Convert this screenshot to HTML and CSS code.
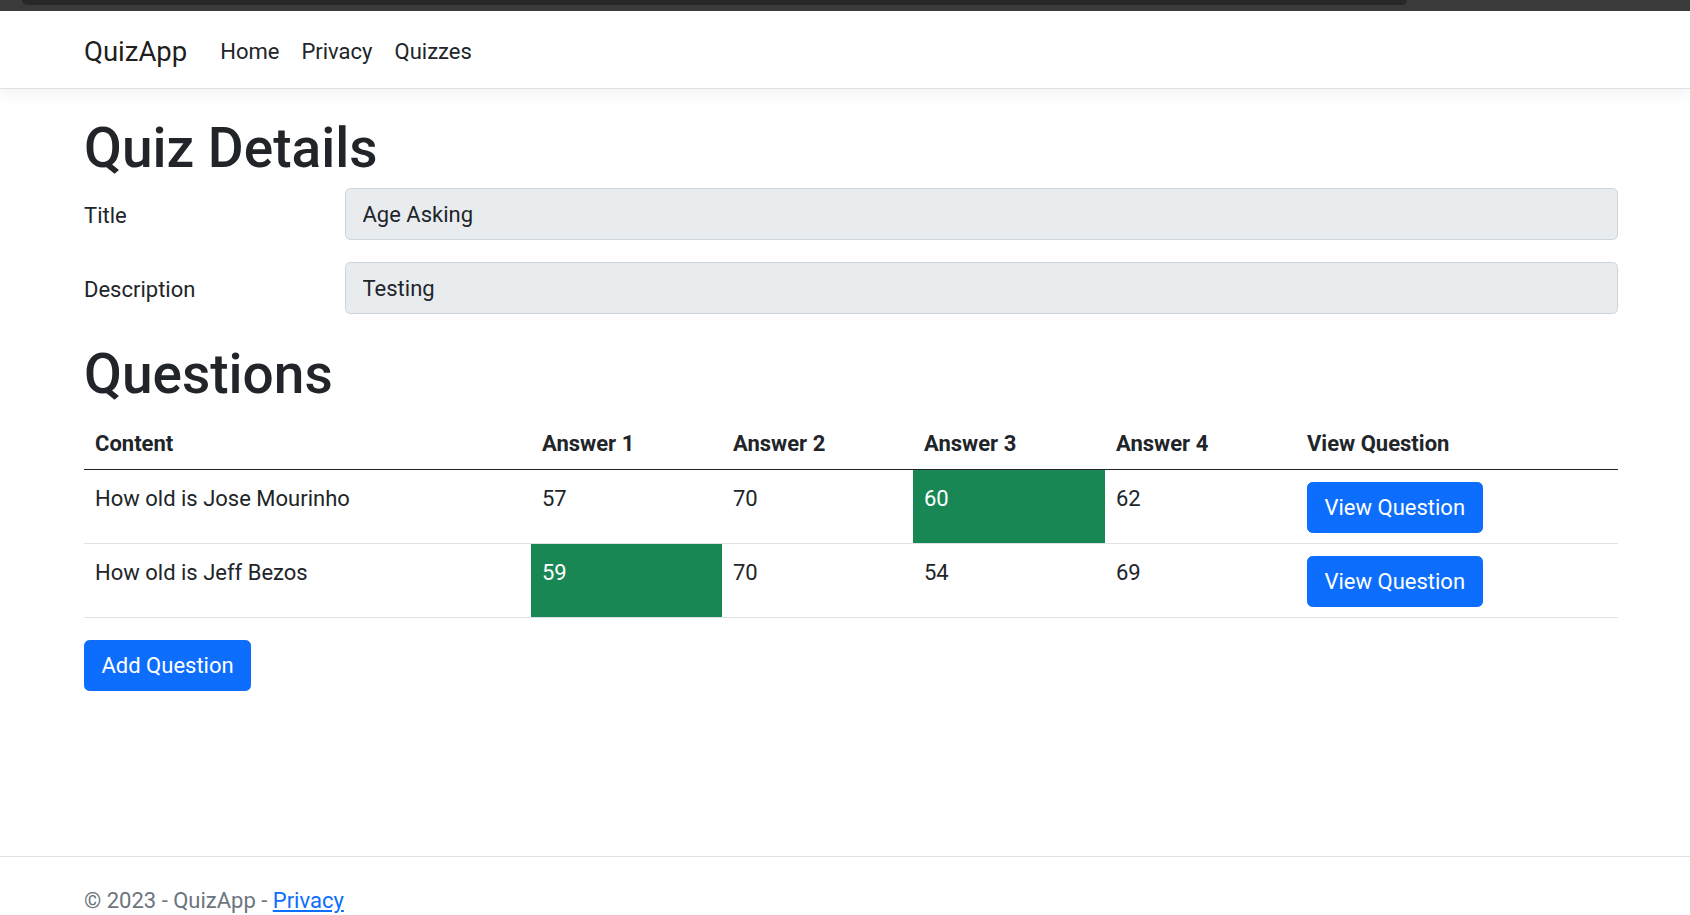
FILE: index.html
```html
<!DOCTYPE html>
<html lang="en">
<head>
<meta charset="utf-8">
<title>Quiz Details - QuizApp</title>
<link rel="stylesheet" href="styles.css">
</head>
<body>
<div class="page">
  <div class="chrome"><div class="chrome-tab"></div></div>
  <header class="navbar">
    <div class="container nav-inner">
      <a class="brand" href="#">QuizApp</a>
      <ul class="nav">
        <li><a class="nav-link" href="#">Home</a></li>
        <li><a class="nav-link" href="#">Privacy</a></li>
        <li><a class="nav-link" href="#">Quizzes</a></li>
      </ul>
    </div>
  </header>
  <main class="container main">
    <h1 class="title">Quiz Details</h1>
    <form class="details">
      <div class="form-row">
        <label class="form-label" for="f-title">Title</label>
        <input class="form-control" id="f-title" value="Age Asking" readonly>
      </div>
      <div class="form-row">
        <label class="form-label" for="f-desc">Description</label>
        <input class="form-control" id="f-desc" value="Testing" readonly>
      </div>
    </form>
    <h1 class="title subtitle">Questions</h1>
    <table class="table">
      <colgroup>
        <col class="col-content">
        <col class="col-answer">
        <col class="col-answer">
        <col class="col-answer3">
        <col class="col-answer">
        <col class="col-view">
      </colgroup>
      <thead>
        <tr>
          <th>Content</th>
          <th>Answer 1</th>
          <th>Answer 2</th>
          <th>Answer 3</th>
          <th>Answer 4</th>
          <th>View Question</th>
        </tr>
      </thead>
      <tbody>
        <tr>
          <td>How old is Jose Mourinho</td>
          <td>57</td>
          <td>70</td>
          <td class="correct">60</td>
          <td>62</td>
          <td><a class="btn" href="#">View Question</a></td>
        </tr>
        <tr>
          <td>How old is Jeff Bezos</td>
          <td class="correct">59</td>
          <td>70</td>
          <td>54</td>
          <td>69</td>
          <td><a class="btn" href="#">View Question</a></td>
        </tr>
      </tbody>
    </table>
    <a class="btn" href="#">Add Question</a>
  </main>
  <footer class="footer">
    <div class="container">© 2023 - QuizApp - <a class="footer-link" href="#">Privacy</a></div>
  </footer>
</div>
</body>
</html>
```

FILE: styles.css
```css
html, body {
  margin: 0;
  padding: 0;
  overflow: hidden;
  background: #fff;
}

body {
  font-family: Roboto, "Liberation Sans", sans-serif;
  font-size: 22px;
  line-height: 33px;
  color: #212529;
}

*, *::before, *::after {
  box-sizing: border-box;
}

.page {
  display: flex;
  flex-direction: column;
  height: 942px;
}

.container {
  width: 1534px;
  margin-left: 84px;
}

/* browser chrome strip */
.chrome {
  height: 11px;
  flex: none;
  background: #3b3b3b;
}

.chrome-tab {
  margin-left: 22px;
  width: 1385px;
  height: 5px;
  background: #282828;
  border-radius: 0 0 9px 9px;
}

/* navbar */
.navbar {
  flex: none;
  height: 78px;
  padding-top: 4px;
  display: flex;
  align-items: center;
  background: #fff;
  border-bottom: 1px solid #dee2e6;
  box-shadow: 0 5.5px 16.5px rgba(0, 0, 0, 0.05);
  position: relative;
  z-index: 1;
}

.nav-inner {
  display: flex;
  align-items: center;
}

.brand {
  font-size: 27.5px;
  line-height: 41px;
  color: rgba(0, 0, 0, 0.9);
  text-decoration: none;
  margin-right: 22px;
}

.nav {
  display: flex;
  list-style: none;
  margin: 0;
  padding: 0;
}

.nav-link {
  display: block;
  padding: 0 11px;
  color: #212529;
  text-decoration: none;
}

/* main */
.main {
  flex: 1;
  padding-top: 22px;
}

.title {
  margin: 4px 0 7px;
  font-size: 55px;
  line-height: 66px;
  font-weight: 500;
}

.details {
  margin: 0;
}

.form-row {
  display: grid;
  grid-template-columns: 261px 1fr;
  margin-bottom: 22px;
}

.form-label {
  padding-top: 11px;
  line-height: 33px;
}

.form-control {
  display: block;
  width: 100%;
  height: 52px;
  padding: 8px 16.5px 7px;
  font: inherit;
  color: #212529;
  background: #e9ecef;
  border: 1px solid #ced4da;
  border-radius: 5.5px;
  outline: none;
}

.subtitle {
  margin: 27px 0 7px;
}

/* table */
.table {
  width: 100%;
  table-layout: fixed;
  border-collapse: collapse;
  margin-bottom: 22px;
}

.col-content { width: 447px; }
.col-answer { width: 191px; }
.col-answer3 { width: 192px; }
.col-view { width: 322px; }

.table th,
.table td {
  text-align: left;
  vertical-align: top;
  line-height: 33px;
}

.table th {
  padding: 13px 11px 9px;
  font-weight: 700;
  border-bottom: 1px solid #212529;
}

.table td {
  padding: 12px 11px 10px;
  border-bottom: 1px solid #dee2e6;
}

.table td.correct {
  background: #198754;
  color: #fff;
}

.btn {
  display: inline-block;
  padding: 8px 16.5px;
  font-size: 22px;
  line-height: 33px;
  color: #fff;
  background: #0d6efd;
  border: 1px solid #0d6efd;
  border-radius: 5.5px;
  text-decoration: none;
  vertical-align: top;
}

/* footer */
.footer {
  flex: none;
  border-top: 1px solid #dee2e6;
  padding-top: 3px;
  line-height: 82.5px;
  color: #6c757d;
  white-space: nowrap;
}

.footer-link {
  color: #0d6efd;
  text-decoration: underline;
}
```
